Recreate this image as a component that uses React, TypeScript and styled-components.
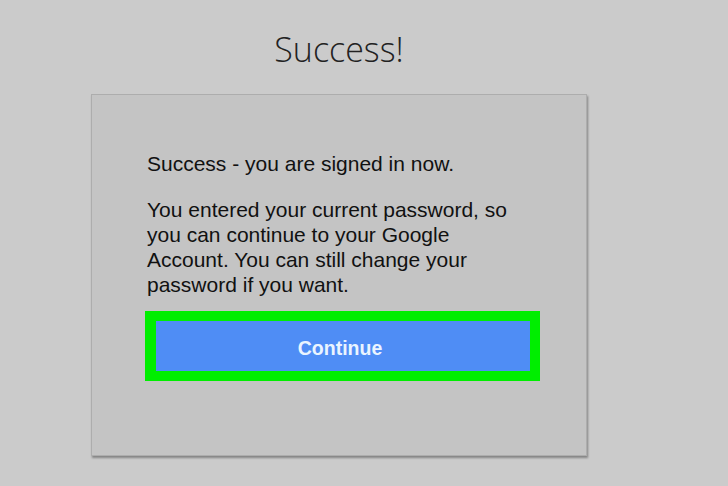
import React from "react";
import styled, { createGlobalStyle } from "styled-components";

const Global = createGlobalStyle`
  html, body { margin: 0; padding: 0; background: #cbcbcb; }
  body { width: 728px; height: 486px; overflow: hidden; }
`;

const Page = styled.div`
  width: 496px;
  margin-left: 91px;
  display: flex;
  flex-direction: column;
  align-items: stretch;
`;

const Title = styled.h1`
  margin: 24px 0 0 0;
  height: 70px;
  font-family: "Open Sans", "Noto Sans", sans-serif;
  font-weight: 300;
  font-size: 34px;
  line-height: 50px;
  color: #222;
  text-align: center;
`;

const Card = styled.div`
  height: 362px;
  box-sizing: border-box;
  background: #c4c4c4;
  border: 1px solid #adadad;
  box-shadow: 1px 2px 2px rgba(0, 0, 0, 0.35);
  padding: 56px 30px 0 55px;
  display: flex;
  flex-direction: column;
`;

const Text = styled.p<{ $gap?: number }>`
  margin: 0 0 ${(p) => p.$gap ?? 0}px 0;
  font-family: "Liberation Sans", Arial, sans-serif;
  font-size: 21px;
  line-height: 25px;
  color: #111;
  white-space: nowrap;
`;

const Button = styled.button`
  width: 395px;
  height: 70px;
  margin-left: -2px;
  box-sizing: border-box;
  border: 10px solid #00ee00;
  border-left-width: 11px;
  background: #4f8df5;
  color: #eaf4ff;
  font-family: "Liberation Sans", Arial, sans-serif;
  font-weight: 700;
  font-size: 19.5px;
  padding: 4px 6px 0 0;
  cursor: pointer;
`;

export default function App() {
  return (
    <>
      <Global />
      <Page>
        <Title>Success!</Title>
        <Card>
          <Text $gap={21}>Success - you are signed in now.</Text>
          <Text $gap={14}>
            You entered your current password, so
            <br />
            you can continue to your Google
            <br />
            Account. You can still change your
            <br />
            password if you want.
          </Text>
          <Button>Continue</Button>
        </Card>
      </Page>
    </>
  );
}
